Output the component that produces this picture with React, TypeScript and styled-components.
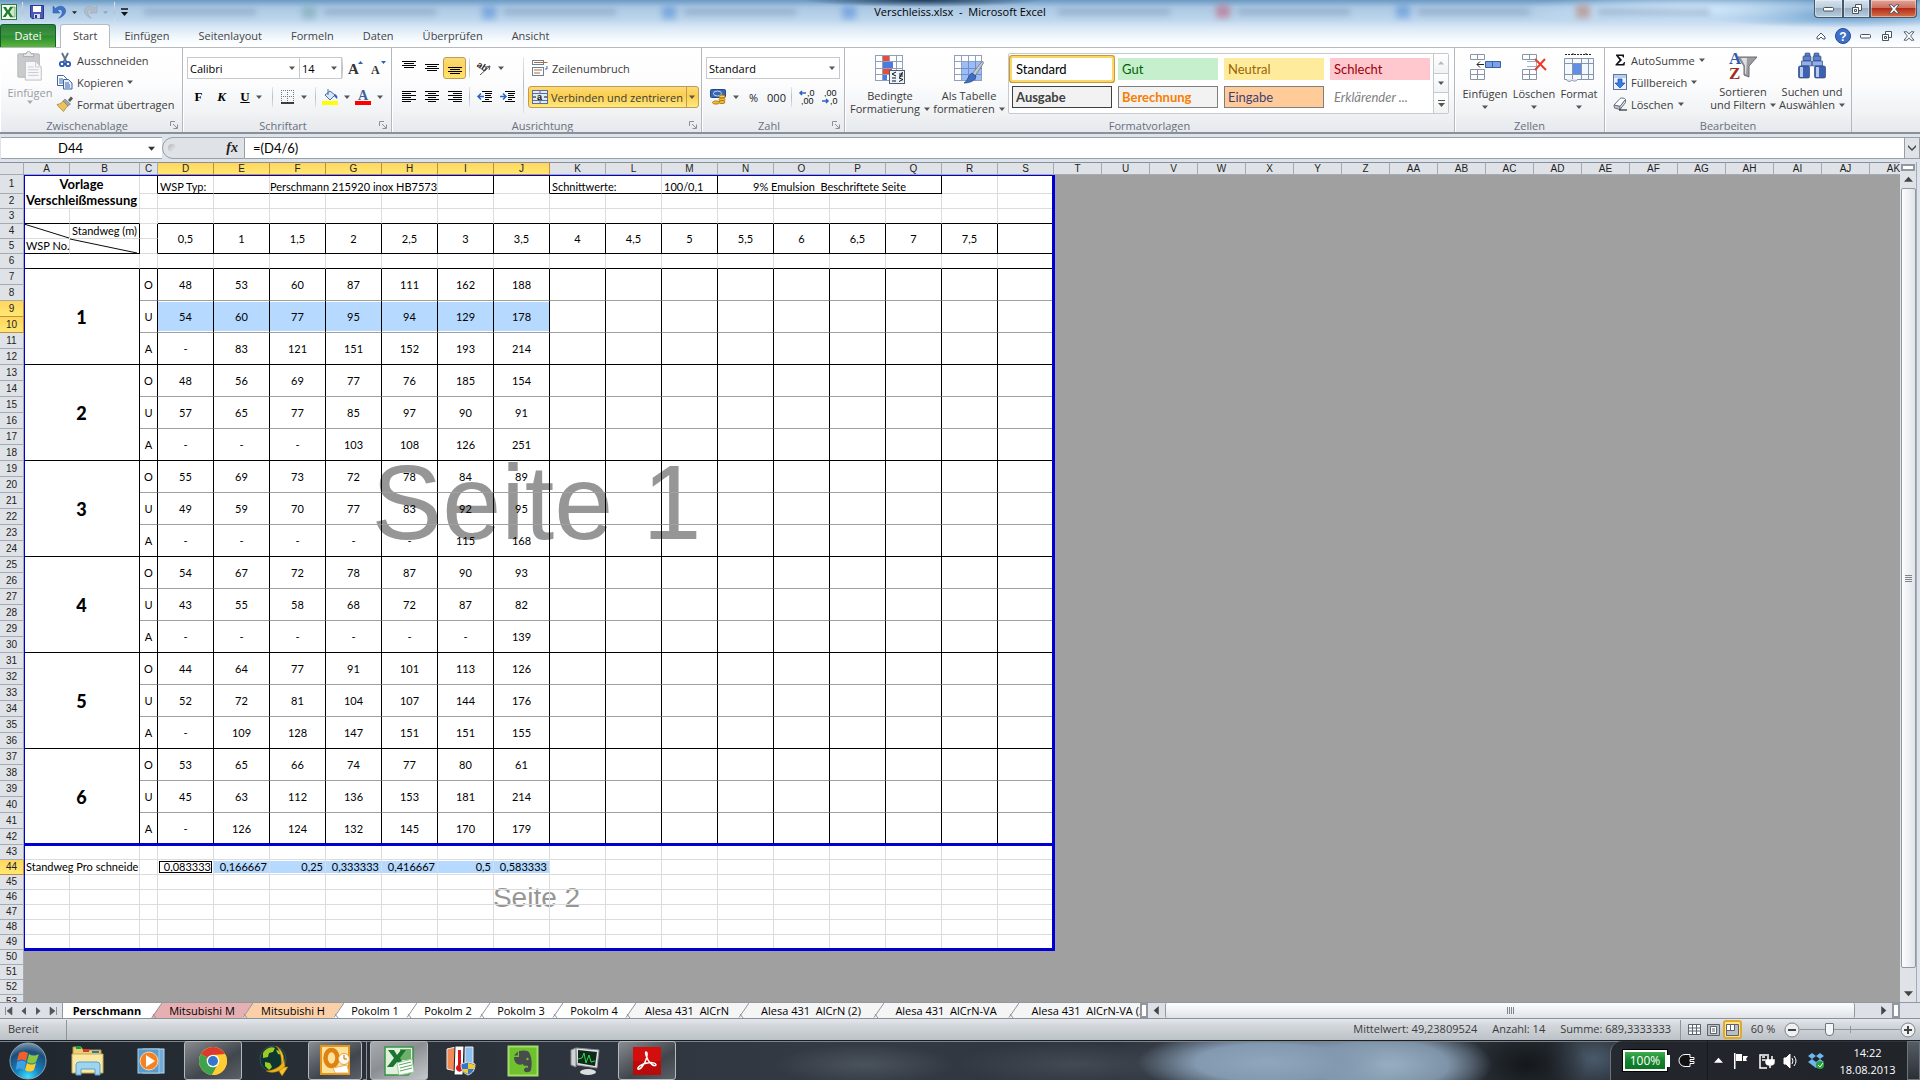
import React from 'react';
import styled, { createGlobalStyle, css } from 'styled-components';

const ui = "'Open Sans', 'Noto Sans', sans-serif";
const sheetFont = "Lato, 'Open Sans', sans-serif";
const arial = "'Liberation Sans', Arial, sans-serif";

const GlobalStyle = createGlobalStyle`
  * { box-sizing: border-box; }
  body { margin: 0; background: #a0a0a0; font-family: ${ui}; font-size: 11px; color: #3b3b3b; overflow: hidden; }
  button, input, select { font: inherit; color: inherit; margin: 0; padding: 0; border: 0; background: none; border-radius: 0; outline: 0; }
  svg { display: block; flex: none; overflow: visible; }
  h1 { margin: 0; font: inherit; }
`;

const Window = styled.div`
  display: flex;
  flex-direction: column;
  height: 100vh;
`;

/* ---------- title bar and ribbon tabs ---------- */

const Glass = styled.header`
  flex: none;
  background:
    radial-gradient(ellipse 120px 7px at 48% 0, #223c58 0, transparent 100%),
    radial-gradient(ellipse 170px 16px at 88% 10px, #d3e9fb 0, transparent 100%),
    radial-gradient(ellipse 150px 14px at 96% 14px, #5c95c8 0, transparent 100%),
    linear-gradient(180deg, #6a9ac4 0, #a9c6e2 7px, #bed7ed 20px, #dbe9f6 28px, #f7fbfe 40px, #ffffff 47px);
  border-bottom: 1px solid #b6babf;
`;

const TitleBar = styled.div`
  display: grid;
  grid-template-columns: 1fr auto 1fr;
  height: 24px;
`;

const QuickAccess = styled.div`
  display: flex;
  align-items: center;
  padding: 0 1px;
  gap: 4px;
  min-width: 0;
`;

const IconButton = styled.button<{ $w?: number; $h?: number }>`
  display: flex;
  align-items: center;
  justify-content: center;
  width: ${(p) => p.$w ?? 16}px;
  height: ${(p) => p.$h ?? 22}px;
`;

const GhostTabs = styled.div`
  display: flex;
  align-items: center;
  flex: 1;
  gap: 8px;
  height: 23px;
  padding: 0 12px;
  overflow: hidden;
  filter: blur(3px);
  opacity: 0.5;
`;

const GhostIcon = styled.span<{ $c: string }>`
  flex: none;
  width: 14px;
  height: 13px;
  background: ${(p) => p.$c};
`;

const GhostText = styled.span`
  flex: none;
  width: 112px;
  height: 6px;
  margin-right: 38px;
  background: #7793b2;
`;

const Title = styled.h1`
  font-size: 11px;
  line-height: 23px;
  color: #000;
  white-space: pre;
`;

const Caption = styled.div`
  display: flex;
  justify-content: flex-end;
  align-items: flex-start;
  min-width: 0;
  padding-right: 3px;
`;

const CaptionButton = styled.button<{ $close?: boolean; $w: number }>`
  display: flex;
  flex: none;
  justify-content: center;
  align-items: center;
  width: ${(p) => p.$w}px;
  height: 18px;
  border: 1px solid #46586b;
  border-top: 0;
  background: ${(p) => (p.$close
    ? 'linear-gradient(#e3a69b 0, #cf6f5f 45%, #b52c17 50%, #d4714a 100%)'
    : 'linear-gradient(#d5e2ee 0, #bccddd 45%, #98aec4 50%, #b9cede 100%)')};
  box-shadow: inset 0 0 0 1px rgba(255, 255, 255, 0.4);
  &:first-of-type { border-bottom-left-radius: 4px; }
  &:last-of-type { border-bottom-right-radius: 4px; }
`;

const TabRow = styled.nav`
  display: flex;
  align-items: flex-end;
  height: 23px;
`;

const FileTab = styled.button`
  width: 56px;
  height: 23px;
  padding-bottom: 1px;
  border: 1px solid #15602a;
  border-bottom: 0;
  border-radius: 3px 3px 0 0;
  background: linear-gradient(#2f7d38 0, #3c9440 45%, #2a8a30 50%, #5cb63d 100%);
  color: #fff;
  font-size: 11px;
`;

const RibbonTab = styled.button<{ $active?: boolean }>`
  height: 24px;
  margin-bottom: -1px;
  padding: 0 ${(p) => (p.$active ? 12 : 14)}px 2px;
  font-size: 11px;
  color: #444;
  & + & { padding-right: 15px; }
  ${(p) => p.$active && css`
    margin-left: 4px;
    background: #fff;
    border: 1px solid #b6babf;
    border-bottom: 0;
    border-radius: 3px 3px 0 0;
  `}
`;

const TabSpacer = styled.div`
  flex: 1;
`;

const WindowTools = styled.div`
  display: flex;
  align-items: center;
  gap: 4px;
  padding-right: 2px;
`;

/* ---------- ribbon ---------- */

const Ribbon = styled.section`
  display: flex;
  flex: none;
  height: 86px;
  background: linear-gradient(#fff 0, #fdfdfe 40%, #f1f3f5 75%, #e6e9ed 100%);
  border-bottom: 2px solid #8b9097;
  overflow: hidden;
`;

const Group = styled.div<{ $w: number }>`
  display: flex;
  flex-direction: column;
  flex: none;
  width: ${(p) => p.$w}px;
  border-right: 1px solid #b4b8be;
  box-shadow: inset 1px 0 0 #fff;
`;

const GroupBody = styled.div<{ $pad?: string }>`
  display: flex;
  height: 68px;
  padding: ${(p) => p.$pad ?? '1px 4px 0'};
`;

const GroupLabel = styled.div`
  display: flex;
  align-items: center;
  height: 16px;
  padding: 2px 4px 0;
  color: #68707c;
  span { flex: 1; text-align: center; }
`;

const Big = styled.button<{ $w: number; $off?: boolean }>`
  display: flex;
  flex-direction: column;
  align-items: center;
  flex: none;
  width: ${(p) => p.$w}px;
  line-height: 13px;
  white-space: nowrap;
  color: ${(p) => (p.$off ? '#9a9da1' : '#3b3b3b')};
  > svg:first-child { margin: 2px 0 5px; }
`;

const BigLine = styled.span`
  display: flex;
  align-items: center;
  gap: 4px;
  min-height: 13px;
`;

const Stack = styled.div<{ $gap?: number }>`
  display: flex;
  flex-direction: column;
  gap: ${(p) => p.$gap ?? 0}px;
`;

const Small = styled.button<{ $inset?: boolean }>`
  display: flex;
  align-items: center;
  gap: 4px;
  height: 22px;
  padding: 0 1px 0 ${(p) => (p.$inset ? 4 : 1)}px;
  white-space: nowrap;
`;

const Tools = styled.div`
  display: flex;
  align-items: center;
  height: 22px;
`;

const Tool = styled.button<{ $w?: number; $on?: boolean }>`
  display: flex;
  align-items: center;
  justify-content: center;
  gap: 6px;
  width: ${(p) => p.$w ?? 23}px;
  height: 22px;
  color: #222;
  ${(p) => p.$on && css`
    border: 1px solid #c29b4c;
    border-radius: 3px;
    background: linear-gradient(#fbdb7a 0, #fcd45c 40%, #fee46f 100%);
  `}
`;

const Letter = styled.span<{ $i?: boolean; $u?: boolean }>`
  font: ${(p) => (p.$i ? 'italic' : 'normal')} bold 13px 'Liberation Serif', serif;
  text-decoration: ${(p) => (p.$u ? 'underline' : 'none')};
  color: #000;
`;

const Divider = styled.span<{ $tall?: boolean; $m?: number }>`
  width: 1px;
  height: ${(p) => (p.$tall ? 56 : 20)}px;
  margin: 0 ${(p) => p.$m ?? 4}px;
  flex: none;
  background: linear-gradient(#e4e6e9, #b9bdc3 50%, #e0e3e6);
`;

const Field = styled.label<{ $w: number }>`
  display: flex;
  align-items: center;
  width: ${(p) => p.$w}px;
  height: 22px;
  margin-right: -1px;
  padding-right: 4px;
  background: #fff;
  border: 1px solid #c6cace;
  color: #000;
  select { appearance: none; flex: 1; min-width: 0; padding-left: 2px; height: 20px; }
`;

const MergeButton = styled.button`
  display: flex;
  align-items: center;
  gap: 3px;
  height: 22px;
  padding-left: 3px;
  border: 1px solid #c29b4c;
  border-radius: 3px;
  background: linear-gradient(#fbdb7a 0, #fbce4d 45%, #feea80 100%);
  white-space: nowrap;
`;

const MergeArrow = styled.span`
  display: flex;
  align-items: center;
  justify-content: center;
  width: 12px;
  height: 20px;
  border-left: 1px solid #c29b4c;
`;

const Gallery = styled.div`
  display: flex;
  width: 442px;
  height: 61px;
  border: 1px solid #c6cace;
  border-radius: 2px;
  background: #fff;
`;

const Swatches = styled.div`
  display: grid;
  grid-template-columns: repeat(4, 100px);
  grid-auto-rows: 22px;
  gap: 6px;
  flex: 1;
  padding: 4px 3px;
`;

const Swatch = styled.button<{ $bg: string; $fg: string; $line?: string; $bold?: boolean; $it?: boolean; $on?: boolean }>`
  padding-left: 3px;
  text-align: left;
  font-family: ${sheetFont};
  font-size: 13px;
  line-height: 18px;
  background: ${(p) => p.$bg};
  color: ${(p) => p.$fg};
  border: 1px solid ${(p) => p.$line ?? p.$bg};
  font-weight: ${(p) => (p.$bold ? 700 : 400)};
  font-style: ${(p) => (p.$it ? 'italic' : 'normal')};
  ${(p) => p.$on && css`box-shadow: 0 0 0 2px #fbd763, 0 0 0 3px #c69a3c; border-radius: 1px;`}
`;

const GalleryScroll = styled.div`
  display: grid;
  grid-template-rows: repeat(3, 1fr);
  width: 15px;
  border-left: 1px solid #c6cace;
  button { display: flex; align-items: center; justify-content: center; border-bottom: 1px solid #c6cace; background: linear-gradient(#fff, #f0f2f4); }
  button:last-child { border-bottom: 0; }
`;

/* ---------- formula bar ---------- */

const FormulaBar = styled.div`
  display: flex;
  flex: none;
  height: 28px;
  padding: 3px 0 3px 1px;
  background: #dde3ec;
`;

const NameBox = styled.label`
  display: flex;
  align-items: center;
  width: 161px;
  height: 22px;
  padding-right: 7px;
  background: #fff;
  border: 1px solid #9a9fa6;
  border-width: 1px 0;
  input { flex: 1; min-width: 0; padding-right: 8px; text-align: center; color: #000; font-family: ${sheetFont}; font-size: 13px; }
`;

const FxZone = styled.div`
  display: flex;
  align-items: center;
  justify-content: space-between;
  width: 83px;
  height: 22px;
  padding: 0 6px 0 5px;
  background: #dfe2e6;
  border: 1px solid #9a9fa6;
  border-radius: 11px 0 0 11px;
  color: #222;
`;

const FxKnob = styled.span`
  width: 8px;
  height: 8px;
  border-radius: 50%;
  background: linear-gradient(135deg, #b3b6ba, #eef0f2);
`;

const FxButton = styled.button`
  font: italic bold 14px 'Liberation Serif', serif;
`;

const Formula = styled.input`
  && {
    flex: 1;
    height: 22px;
    padding-left: 8px;
    background: #fff;
    border: 1px solid #9a9fa6;
    border-width: 1px 0;
    color: #000;
    font-family: ${sheetFont};
    font-size: 13px;
  }
`;

const Expand = styled.button`
  && {
    display: flex;
    align-items: center;
    justify-content: center;
    width: 16px;
    height: 22px;
    border: 1px solid #9a9fa6;
    background: #dfe3e8;
  }
`;

/* ---------- work sheet ---------- */

const Work = styled.main`
  display: flex;
  flex: 1;
  min-height: 0;
  padding-right: 3px;
  background: #dde3ec;
`;

const Canvas = styled.div`
  position: relative;
  flex: 1;
  min-width: 0;
  overflow: hidden;
  background: #a0a0a0;
`;

const Paper = styled.div<{ $top: number; $h: number; $size: number; $drop: number }>`
  position: absolute;
  left: 24px;
  top: ${(p) => p.$top}px;
  width: 1031px;
  height: ${(p) => p.$h}px;
  display: flex;
  align-items: center;
  justify-content: center;
  padding: 0 6px ${(p) => p.$drop}px 0;
  background: #fff;
  font-family: ${arial};
  font-size: ${(p) => p.$size}px;
  color: #969696;
`;

const PageBorder = styled.div<{ $top: number; $h: number }>`
  position: absolute;
  left: 24px;
  top: ${(p) => p.$top}px;
  width: 1031px;
  height: ${(p) => p.$h}px;
  border: 1px solid #0000d2;
  border-width: ${(p) => (p.$top > 100 ? 0 : 1)}px 3px 3px 1px;
  pointer-events: none;
`;

const Sheet = styled.table`
  position: relative;
  table-layout: fixed;
  width: 1918px;
  border-collapse: separate;
  border-spacing: 0;
  font-family: ${sheetFont};
  font-size: 11px;
  line-height: 12px;
  color: #000;
  td, th { padding: 0; overflow: visible; white-space: nowrap; font-weight: 400; }
`;

const headSkin = css<{ $on?: boolean }>`
  background: ${(p) => (p.$on ? 'linear-gradient(#ffd65e, #ffe873)' : '#dfe2e7')};
  border: 0 solid ${(p) => (p.$on ? '#c0903c' : '#a5abb3')};
  color: #222;
  font-family: ${arial};
`;

const ColHead = styled.th<{ $on?: boolean }>`
  ${headSkin}
  height: 13px;
  border-width: 1px 1px 1px 0;
  border-top-color: #8b9097;
  font-size: 10px;
  line-height: 11px;
`;

const RowHead = styled.th<{ $on?: boolean; $h: number }>`
  ${headSkin}
  height: ${(p) => p.$h}px;
  border-width: 0 1px 1px 0;
  font-size: 10px;
  line-height: 12px;
`;

const light = '#dcdcdc';

const Cell = styled.td<{ $r?: string; $b?: string; $align?: string; $sel?: boolean; $active?: boolean; $va?: string }>`
  position: relative;
  border: 0 solid;
  border-right: 1px solid ${(p) => p.$r ?? light};
  border-bottom: 1px solid ${(p) => p.$b ?? light};
  text-align: ${(p) => p.$align ?? 'center'};
  vertical-align: ${(p) => p.$va ?? 'middle'};
  && { padding: 0 ${(p) => (p.$align ? 2 : 0)}px; }
  ${(p) => p.$sel && css`background: #b5d9ff; box-shadow: inset 0 1px 0 #fff, inset 0 -1px 0 #fff;`}
  ${(p) => p.$active && css`box-shadow: inset 0 0 0 1px #fff, inset 0 0 0 2px #000;`}
`;

const SheetTitle = styled(Cell)`
  font-size: 13px;
  line-height: 16px;
  strong { font-weight: 700; }
`;

const BlockNo = styled(Cell)`
  font-size: 18px;
  line-height: 20px;
  strong { font-weight: 900; }
`;

const Diagonal = styled.svg`
  position: absolute;
  inset: 0;
  width: 100%;
  height: 100%;
`;

const VScroll = styled.div`
  display: flex;
  flex-direction: column;
  align-items: center;
  width: 17px;
  padding-top: 2px;
  border-right: 1px solid #a5abb3;
  background: #dfe2e7;
`;

const SplitBox = styled.span<{ $v?: boolean }>`
  width: ${(p) => (p.$v ? 8 : 14)}px;
  height: ${(p) => (p.$v ? 15 : 7)}px;
  flex: none;
  border: 2px solid #9298a0;
  background: #fff;
`;

const ScrollArrow = styled.button<{ $h?: number }>`
  display: flex;
  align-items: center;
  justify-content: center;
  flex: none;
  width: 17px;
  height: ${(p) => p.$h ?? 17}px;
`;

const VThumb = styled.div`
  display: flex;
  align-items: center;
  justify-content: center;
  flex: 1;
  width: 15px;
  margin-bottom: 17px;
  border: 1px solid #9298a0;
  border-radius: 2px;
  background: linear-gradient(90deg, #fdfdfe, #dfe3e8);
`;

/* ---------- sheet tabs ---------- */

const TabBar = styled.div`
  display: flex;
  flex: none;
  height: 17px;
  padding-right: 20px;
  background: #dde1e7;
  border-top: 1px solid #9298a0;
  border-bottom: 1px solid #8a9199;
`;

const TabArea = styled.div`
  display: flex;
  flex: none;
  width: 1140px;
  overflow: hidden;
  background: #f4f5f6;
`;

const NavButtons = styled.div`
  display: flex;
  flex: none;
  width: 63px;
  padding: 0 2px;
  background: #dde1e7;
  border-right: 1px solid #9298a0;
`;

const SheetTab = styled.button<{ $w: number; $bg?: string; $on?: boolean }>`
  flex: none;
  width: ${(p) => p.$w}px;
  height: 15px;
  background: ${(p) => p.$bg ?? '#fff'};
  color: #000;
  font-size: 11px;
  line-height: 14px;
  font-weight: ${(p) => (p.$on ? 700 : 400)};
  white-space: pre;
`;

const Slope = styled.svg`
  flex: none;
`;

const HThumb = styled.div`
  display: flex;
  align-items: center;
  justify-content: center;
  flex: 1;
  margin-right: 20px;
  border: 1px solid #9298a0;
  border-width: 0 1px;
  border-radius: 2px;
  background: linear-gradient(#fdfdfe, #dfe3e8);
`;

/* ---------- status bar ---------- */

const StatusBar = styled.footer`
  display: flex;
  align-items: center;
  flex: none;
  height: 21px;
  padding: 0 4px 0 8px;
  background: linear-gradient(#e4e7eb 0, #d3d7dc 30%, #bcc1c7 100%);
  white-space: nowrap;
`;

const Ready = styled.span`
  width: 59px;
  height: 20px;
  line-height: 18px;
  border-right: 1px solid #8f959c;
`;

const Stats = styled.div`
  display: flex;
  flex: 1;
  justify-content: flex-end;
  gap: 15px;
  margin-right: 9px;
  padding-bottom: 2px;
`;

const Views = styled.div`
  display: flex;
  align-items: center;
  height: 20px;
  padding-left: 4px;
  border-left: 1px solid #8f959c;
`;

const ViewButton = styled.button<{ $on?: boolean }>`
  && {
    display: flex;
    align-items: center;
    justify-content: center;
    width: 19px;
    height: 19px;
    border: ${(p) => (p.$on ? '2px solid #e0a92c' : '0')};
    border-radius: 3px;
    background: ${(p) => (p.$on ? '#ffe48a' : 'none')};
  }
`;

const ZoomValue = styled.span`
  width: 42px;
  padding-bottom: 2px;
  text-align: center;
`;

const ZoomSlider = styled.input`
  appearance: none;
  width: 100px;
  height: 14px;
  && { background: linear-gradient(#8c97a5, #8c97a5) 0 50% / 100% 1px no-repeat, linear-gradient(#8c97a5, #8c97a5) 50% 50% / 1px 7px no-repeat; }
  &::-webkit-slider-thumb { appearance: none; width: 9px; height: 13px; border: 1px solid #6c7580; border-radius: 1px 1px 4px 4px; background: #f4f6f8; }
`;

/* ---------- task bar ---------- */

const Taskbar = styled.footer`
  display: flex;
  flex: none;
  height: 40px;
  border-top: 1px solid #1b1f24;
  box-shadow: inset 0 1px 0 #7c848d;
  background:
    radial-gradient(ellipse 130px 34px at 66% 55%, #8fa6bc 0, #8399af 55%, transparent 100%),
    radial-gradient(ellipse 110px 40px at 72% 60%, #9bb2c6 0, #7e93a8 60%, transparent 100%),
    radial-gradient(ellipse 60px 40px at 79.5% 60%, #14181c 0, transparent 100%),
    radial-gradient(ellipse 50px 34px at 83% 45%, #4a5a6b 0, transparent 100%),
    radial-gradient(ellipse 90px 20px at 45% 60%, #4a525c 0, transparent 100%),
    radial-gradient(ellipse 120px 24px at 56% 60%, #434a53 0, transparent 100%),
    linear-gradient(90deg, #20262d 0, #2a3038 20%, #343b45 45%, #2d333c 58%, #3a424c 62%, #262b31 84%, #1d2126 100%);
`;

const TaskItems = styled.div`
  display: flex;
  flex: 1;
  align-items: center;
`;

const TaskButton = styled.button<{ $open?: boolean; $bright?: boolean; $w?: number }>`
  && {
    display: flex;
    align-items: center;
    justify-content: center;
    width: ${(p) => p.$w ?? 62}px;
    height: 39px;
    ${(p) => p.$open && css`
      margin: 0 2px;
      border: 1px solid #b5babf;
      border-radius: 3px;
      background: ${p.$bright
        ? 'linear-gradient(150deg, #a8abae 0, #8b8f93 45%, #c5c8ca 100%)'
        : 'linear-gradient(150deg, #888c91 0, #5c6167 35%, #41464d 60%, #5a6067 100%)'};
    `}
  }
`;

const StackEdge = styled.span`
  width: 4px;
  height: 39px;
  margin: 0 1px 0 -1px;
  border: 1px solid #8d9399;
  border-left: 0;
`;

const Tray = styled.div`
  display: flex;
  align-items: center;
  height: 39px;
  padding-left: 12px;
  background: rgba(34, 38, 44, 0.85);
  border-left: 1px solid #6c737b;
  border-radius: 12px 0 0 0;
  color: #fff;
`;

const Power = styled.div`
  display: flex;
  align-items: center;
  gap: 9px;
  width: 85px;
  height: 39px;
  border-right: 1px solid #16191d;
`;

const Battery = styled.span`
  display: flex;
  align-items: center;
  justify-content: center;
  width: 44px;
  height: 21px;
  border: 2px solid #fff;
  outline: 1px solid #000;
  background: linear-gradient(#3fae4e 0, #14852c 50%, #0d7524 100%);
  font-size: 12px;
`;

const BatteryCap = styled.span`
  width: 3px;
  height: 12px;
  margin-left: -9px;
  background: #fff;
`;

const TrayIcons = styled.div`
  display: flex;
  align-items: center;
  justify-content: space-between;
  width: 116px;
  margin-right: 4px;
  padding-left: 6px;
`;

const Clock = styled.div`
  width: 79px;
  text-align: center;
  font-size: 11px;
  line-height: 17px;
`;

const ShowDesktop = styled.button`
  && {
    width: 13px;
    height: 39px;
    border: 1px solid #6d747c;
    background: linear-gradient(#565c64, #2b3036);
  }
`;

/* ---------- drawings ---------- */

const Arrow = ({ up, left, right, c = '#555', s = 7 }: { up?: boolean; left?: boolean; right?: boolean; c?: string; s?: number }) => {
  const rot = up ? 180 : left ? 90 : right ? -90 : 0;
  return (
    <svg width={s} height={s} viewBox="0 0 8 8">
      <path d="M0 2h8L4 6.5z" fill={c} transform={`rotate(${rot} 4 4)`} />
    </svg>
  );
};

const Launcher = () => (
  <svg width="8" height="8" viewBox="0 0 8 8" fill="none" stroke="#8a9098">
    <path d="M.5 5V.5H5M3 3l4 4M7.500 3.500v4h-4" />
  </svg>
);

const CustomizeIcon = () => (
  <svg width="7" height="8" viewBox="0 0 7 8"><path d="M0 1h7" stroke="#111" strokeWidth="1.500" /><path d="M0 4h7L3.500 8z" fill="#111" /></svg>
);

const ExcelLogo = () => (
  <svg width="16" height="16" viewBox="0 0 16 16">
    <rect x=".5" y=".5" width="15" height="15" fill="#f4fbf2" stroke="#2d7a35" />
    <path d="M9 3h5v10H9" fill="#cfe8c9" stroke="#5ba35a" strokeWidth=".8" />
    <path d="M2 3h3l2 3.400L9 3h3L8.600 8 12 13H9L6.800 9.600 4.700 13H1.700l3.500-5z" fill="#1f7a2f" />
  </svg>
);

const SaveIcon = () => (
  <svg width="14" height="14" viewBox="0 0 14 14">
    <path d="M.5.5h13v13H2l-1.500-1.500z" fill="#4a58b8" stroke="#2a3688" />
    <path d="M3 1h8v6H3z" fill="#fff" />
    <path d="M4 9h6v4.500H4z" fill="#d9def2" /><path d="M5 10h2v3H5z" fill="#2a3688" />
  </svg>
);

const UndoIcon = ({ redo }: { redo?: boolean }) => (
  <svg width="13" height="14" viewBox="0 0 13 14">
    <path
      d="M0 1v7h7L4.700 5.500C6.800 3.700 9.200 4.600 9.200 7.200c0 2.200-1.500 4-3.700 6 4.200-1.200 7.100-4 7.100-7.200C12.600 1.200 6.500-.6 2.500 3.400z"
      fill={redo ? '#b3bcc6' : '#3e73c8'}
      stroke={redo ? '#98a3af' : '#2a57a5'}
      strokeWidth=".5"
      transform={redo ? 'translate(13 0) scale(-1 1)' : undefined}
    />
  </svg>
);

const PasteIcon = () => (
  <svg width="28" height="30" viewBox="0 0 28 32">
    <rect x="1" y="3" width="23" height="25" rx="1" fill="#c9cacc" stroke="#b5b6b8" />
    <path d="M7 5V3h3a2.500 2.500 0 0 1 5 0h3v3H7z" fill="#e8e9ea" stroke="#a7a8aa" />
    <path d="M9 11h11l6 6v14H9z" fill="#f7f7f9" stroke="#bcbdc4" />
    <path d="M20 11v6h6M12 17h6M12 20h11M12 23h11M12 26h11" fill="none" stroke="#c8c9d0" />
  </svg>
);

const CutIcon = () => (
  <svg width="16" height="16" viewBox="0 0 16 16" fill="none">
    <path d="M5 1l4.500 9M11 1L6.500 10" stroke="#5f7186" strokeWidth="1.800" />
    <circle cx="5" cy="12" r="2.200" stroke="#2c59b4" strokeWidth="1.800" /><circle cx="11" cy="12" r="2.200" stroke="#2c59b4" strokeWidth="1.800" />
  </svg>
);

const CopyIcon = () => (
  <svg width="16" height="16" viewBox="0 0 16 16" stroke="#3c66a8">
    <path d="M.5 1.500h6l3 3v7h-9z" fill="#fff" /><path d="M2 5h4M2 7h5M2 9h4" />
    <path d="M6.500 5.500h5l3.500 3.500v6H6.500z" fill="#e4eeff" /><path d="M8 9h4M8 11h5M8 13h5" />
  </svg>
);

const BrushIcon = () => (
  <svg width="16" height="16" viewBox="0 0 16 16">
    <path d="M11 4l3-3.500 2 2L13 6z" fill="#59554f" />
    <path d="M8 3l5.500 5L11 10 6 5z" fill="#9ba4b0" stroke="#6b7079" strokeWidth=".6" />
    <path d="M6 5l5 5c-2 1-3 4-4.500 5.500C4 13 1.500 11 0 8.500 3 8 5 7 6 5z" fill="#e9c45e" stroke="#a17c25" strokeWidth=".7" />
  </svg>
);

const FontSize = ({ up }: { up?: boolean }) => (
  <svg width="15" height="16" viewBox="0 0 15 16">
    <text x="0" y="14" fontFamily="Liberation Serif" fontWeight="700" fontSize={up ? 15 : 12} fill="#333">A</text>
    <path d={up ? 'M10 4h5l-2.500-3z' : 'M10 1h5l-2.500 3z'} fill="#2d5fb8" />
  </svg>
);

const BordersIcon = () => (
  <svg width="14" height="14" viewBox="0 0 14 14" stroke="#777" fill="none">
    <path d="M.5 0v13M6.500 0v13M12.500 0v13M0 .5h13M0 6.500h13" strokeDasharray="1 1" />
    <path d="M0 13h13" stroke="#000" strokeWidth="1.500" />
  </svg>
);

const FillIcon = () => (
  <svg width="16" height="16" viewBox="0 0 16 16">
    <path d="M3 6l5-4 5 4-5 5z" fill="#d9e6f7" stroke="#4c6f9f" /><path d="M6 0v6" stroke="#4c6f9f" />
    <path d="M13 5c2 1 3 3 2 5l-3-3z" fill="#2c62b8" /><path d="M0 12h16v4H0z" fill="#ff0" />
  </svg>
);

const FontColorIcon = () => (
  <svg width="16" height="16" viewBox="0 0 16 16">
    <text x="3" y="11" fontFamily="Liberation Serif" fontWeight="700" fontSize="14" fill="#3b5f9d">A</text>
    <path d="M0 12h16v4H0z" fill="#f00" />
  </svg>
);

const Lines = ({ rows }: { rows: [number, number][] }) => (
  <svg width="14" height="14" viewBox="0 0 14 14" stroke="#000">
    {rows.map(([a, b], i) => <path key={i} d={`M${a} ${i * 2 + 1.5}H${b}`} />)}
  </svg>
);

const VAlign = ({ y }: { y: number }) => (
  <svg width="14" height="16" viewBox="0 0 14 16" stroke="#000">
    <path d={`M0 ${y + 0.5}h14M2 ${y + 2.5}h10M0 ${y + 4.5}h14M2 ${y + 6.5}h10`} />
  </svg>
);

const OrientIcon = () => (
  <svg width="16" height="16" viewBox="0 0 16 16">
    <text x="0" y="9" fontFamily="Liberation Sans" fontSize="9" fontWeight="700" fill="#222" transform="rotate(35 5 8)">ab</text>
    <path d="M4 15L14 6M14 6l-4 1M14 6l-1 4" stroke="#555" fill="none" />
  </svg>
);

const IndentIcon = ({ right }: { right?: boolean }) => (
  <svg width="16" height="14" viewBox="0 0 16 14" stroke="#000">
    <path d="M5 1.500h10M8 3.500h7M8 5.500h6M8 7.500h7M8 9.500h4M5 11.500h10" />
    <path d={right ? 'M0 6.500h6M3 3.500l3 3-3 3' : 'M7 6.500H1M4 3.500l-3 3 3 3'} stroke="#2d64c4" strokeWidth="1.500" fill="none" />
  </svg>
);

const WrapIcon = () => (
  <svg width="16" height="16" viewBox="0 0 16 16" fill="none" stroke="#6f7f98">
    <rect x=".5" y=".5" width="11" height="4" /><rect x=".5" y="7.500" width="11" height="8" />
    <path d="M2 2.500h13.500M2 10h8M2 13h6" stroke="#b56a3c" /><path d="M15 6v3h-2" stroke="#2d64c4" />
  </svg>
);

const MergeIcon = () => (
  <svg width="16" height="14" viewBox="0 0 16 14">
    <rect x=".5" y=".5" width="15" height="13" fill="#dfe9f7" stroke="#5b6f8d" />
    <path d="M.5 3.500h15M.5 10.500h15M8 .5v3M8 10.500v3" stroke="#5b6f8d" />
    <path d="M1 7h3M12 7h3" stroke="#111" /><text x="5" y="9.500" fontFamily="Liberation Sans" fontWeight="700" fontSize="9" fill="#111">a</text>
  </svg>
);

const MoneyIcon = () => (
  <svg width="17" height="16" viewBox="0 0 17 16">
    <rect x=".5" y=".5" width="15" height="8" rx="1" fill="#3667b5" stroke="#22478a" />
    <ellipse cx="7.500" cy="4.500" rx="4" ry="2.500" fill="none" stroke="#c3d6f4" />
    <ellipse cx="12" cy="7.500" rx="3" ry="1.500" fill="#f9d05a" stroke="#b57c14" /><ellipse cx="12" cy="10.500" rx="3" ry="1.500" fill="#f5b935" stroke="#b57c14" />
    <ellipse cx="6" cy="13.500" rx="3.500" ry="1.600" fill="#f5b935" stroke="#b57c14" /><ellipse cx="12" cy="13" rx="3" ry="1.600" fill="#f5b935" stroke="#b57c14" />
  </svg>
);

const DecimalIcon = ({ less }: { less?: boolean }) => (
  <svg width="16" height="16" viewBox="0 0 16 16">
    <text x={less ? 2 : 8} y="7" fontFamily="Liberation Sans" fontSize="9" fill="#111">{less ? ',00' : ',0'}</text>
    <text x={less ? 8 : 2} y="15" fontFamily="Liberation Sans" fontSize="9" fill="#111">{less ? ',0' : ',00'}</text>
    <path d={less ? 'M0 12h6M4 10l2 2-2 2' : 'M7 4H1M3 2L1 4l2 2'} stroke="#2d64c4" strokeWidth="1.500" fill="none" />
  </svg>
);

const GridBase = () => (
  <g>
    <rect x=".5" y=".5" width="27" height="25" fill="#fff" stroke="#8ea0bd" />
    <path d="M7.500 0v26M14.500 0v26M21.500 0v26M0 6.500h28M0 13.500h28M0 19.500h28" stroke="#8ea0bd" />
  </g>
);

const ConditionalIcon = () => (
  <svg width="30" height="29" viewBox="0 0 30 29">
    <GridBase />
    <path d="M8 1h6v5H8zM8 14h9v5H8z" fill="#ee4a33" /><path d="M8 7h10v6H8zM8 20h4v5H8z" fill="#4a7be0" />
    <rect x="14.500" y="15.500" width="15" height="13" fill="#eef3fb" stroke="#4e5c70" />
    <path d="M21 17l-4 2 4 2M17 23h4M17 26h4M24 19h4M24 21h4M27.500 17l-3 6M24 23l4 1.500-4 2" fill="none" stroke="#111" />
  </svg>
);

const TableIcon = () => (
  <svg width="30" height="29" viewBox="0 0 30 29">
    <GridBase />
    <path d="M8 7h19v18H8z" fill="#9dbcf3" /><path d="M14.500 6v20M21.500 6v20M7 13.500h21M7 19.500h21" stroke="#6d8fd0" />
    <path d="M28.500 6l1 2L21 21l-3-2z" fill="#c7ccd3" stroke="#63686f" strokeWidth=".7" />
    <path d="M18 18l4 3c-1 5-6 7-12 7 4-2 4-8 8-10z" fill="#3f6fc0" stroke="#1f4488" strokeWidth=".7" />
  </svg>
);

const InsertCells = () => (
  <svg width="31" height="29" viewBox="0 0 31 29" fill="#fff" stroke="#8894a8">
    <path d="M.5 1.500h14v5H.5zM7.500 1.500v5M.5 16.500h14v10H.5zM7.500 16.500v10M.5 21.500h14" />
    <path d="M15.500 8.500h15v6h-15zM22.500 8.500v6" fill="#7aa2ea" stroke="#3c5f9e" /><path d="M14 11.500H7M10 8.500l-3 3 3 3" fill="none" stroke="#222" />
  </svg>
);

const DeleteCells = () => (
  <svg width="25" height="29" viewBox="0 0 25 29" fill="#fff" stroke="#8894a8">
    <path d="M.5 1.500h14v5H.5zM7.500 1.500v5M.5 16.500h14v10H.5zM7.500 16.500v10M.5 21.500h14" />
    <path d="M5.500 8.500h9v5h-9" strokeDasharray="1 1" stroke="#3c5f9e" /><path d="M13 6l11 11M23 6L13 17" stroke="#ee3a22" strokeWidth="2" />
  </svg>
);

const FormatCells = () => (
  <svg width="31" height="29" viewBox="0 0 31 29" fill="#f4f8ff" stroke="#8894a8">
    <path d="M.5 5.500h29v21H.5zM.5 10.500h29M.5 21.500h29M8.500 5.500v21M17.500 5.500v21M24.500 5.500v21" />
    <path d="M9 11h8v10H9z" fill="#5f8ee6" stroke="none" /><path d="M1 1.500h27M9 0v3M22 0v3" strokeDasharray="2 1" stroke="#222" />
    <path d="M2 26c1 3 5 3 6 1 2 2 5 1 6-1" fill="#dfe8f5" />
  </svg>
);

const SumIcon = () => (
  <svg width="14" height="14" viewBox="0 0 14 14">
    <path d="M3 1.500h8v3h-1q0-1.500-1.500-1.500H5.500L9 7l-4 4h4q1.500 0 2-2h1l-.5 3.500H2.500v-1L6.500 7 3 2.500z" fill="#111" />
  </svg>
);

const FillDown = () => (
  <svg width="14" height="16" viewBox="0 0 14 16">
    <rect x=".5" y=".5" width="13" height="15" fill="#eaf2ff" stroke="#5d789f" /><path d="M1 1h12v3H1z" fill="#b9cdec" />
    <path d="M5 5h4v4h3l-5 5-5-5h3z" fill="#3a7ae4" stroke="#1e4fae" strokeWidth=".7" />
  </svg>
);

const EraserIcon = () => (
  <svg width="14" height="14" viewBox="0 0 14 14" stroke="#6a7180">
    <path d="M1 8l6-6.500c1-1 5-.5 5.500 1L7 9.500z" fill="#fff" /><path d="M1 8l6 1.500v3L1.500 11z" fill="#b9c6dc" /><path d="M12.500 2.500v3L7 12.500v-3z" fill="#dfe6f1" /><path d="M6 13h8" stroke="#000" />
  </svg>
);

const SortIcon = () => (
  <svg width="30" height="29" viewBox="0 0 30 29">
    <text x="1" y="13" fontFamily="Liberation Serif" fontWeight="700" fontSize="17" fill="#2f5ba8">A</text>
    <text x="1" y="28" fontFamily="Liberation Serif" fontWeight="700" fontSize="17" fill="#9c2f28">Z</text>
    <path d="M10 6h19l-8 9v11l-5-2v-9z" fill="#9b9da0" stroke="#6b6d70" /><path d="M13 7h6l-1 16-1-.5v-8z" fill="#dfe0e1" />
  </svg>
);

const FindIcon = () => (
  <svg width="28" height="29" viewBox="0 -2 28 29" stroke="#22386e" strokeWidth=".6" fill="#5d82cc">
    <rect x="7" y="0" width="5" height="4" rx="1" /><rect x="16" y="0" width="5" height="4" rx="1" />
    <rect x="5" y="3" width="8" height="5" rx="1" /><rect x="15" y="3" width="8" height="5" rx="1" />
    <path d="M3.500 8h10v5h-10zM14.500 8h10v5h-10z" fill="#8fb0ea" /><rect x=".5" y="13" width="11" height="12" rx="1.500" fill="#3d62b0" /><rect x="16.500" y="13" width="11" height="12" rx="1.500" fill="#3d62b0" />
    <path d="M2 14h3v10H2zM18 14h3v10h-3z" fill="#b5cbf3" stroke="none" />
  </svg>
);

const HelpIcon = () => (
  <svg width="16" height="16" viewBox="0 0 16 16">
    <circle cx="8" cy="8" r="7.500" fill="#3f6fc9" stroke="#274a96" />
    <text x="8" y="12.500" textAnchor="middle" fontFamily="Liberation Sans" fontWeight="700" fontSize="12" fill="#fff">?</text>
  </svg>
);

const MinGlyph = ({ w = 11 }: { w?: number }) => (
  <svg width={w} height="6" viewBox="0 0 11 6"><rect x=".5" y="1.500" width="10" height="3.500" rx="1" fill="#fff" stroke="#4a5561" /></svg>
);
const RestoreGlyph = () => (
  <svg width="12" height="12" viewBox="0 0 12 12" fill="#fff" stroke="#4a5561"><path d="M4.500 1.500h6v6h-6z" /><path d="M1.500 4.500h6v6h-6z" /><path d="M3.500 6.500h2v2h-2z" /></svg>
);
const CloseGlyph = () => (
  <svg width="12" height="10" viewBox="0 0 12 10"><path d="M1 .8h3L6 3.200 8 .8h3L7.600 5 11 9.200H8L6 6.800 4 9.200H1L4.400 5z" fill="#fff" stroke="#4a5561" strokeWidth=".9" /></svg>
);

const StartOrb = () => (
  <svg width="38" height="38" viewBox="0 0 38 38">
    <defs><radialGradient id="orb" cx=".5" cy=".95" r=".95"><stop offset="0" stopColor="#3fe0ff" /><stop offset=".35" stopColor="#1683c0" /><stop offset=".75" stopColor="#1c4c78" /><stop offset="1" stopColor="#7f9bb4" /></radialGradient></defs>
    <circle cx="19" cy="19" r="18" fill="url(#orb)" stroke="#87a7be" />
    <path d="M10 11c3-2 6-2 9 0l-2 8c-3-2-6-2-9 0z" fill="#f0602b" /><path d="M20 12c3 2 6 2 10 0l-3 8c-3 2-6 2-9 0z" fill="#8cc63e" />
    <path d="M8 20c3-2 6-2 9 0l-2 8c-3-2-5-2-8 0z" fill="#3fa0ea" /><path d="M18 21c3 2 6 2 9 0l-2 7c-3 2-6 2-9 0z" fill="#ffcb2d" />
  </svg>
);

const FolderIcon = () => (
  <svg width="34" height="32" viewBox="0 0 34 32">
    <path d="M2 2h8l2 3h18v22H2z" fill="#e9cf75" stroke="#b2973f" /><path d="M5 1h5v3H5z" fill="#1d9c3a" /><path d="M12 4h6v3h-6z" fill="#d23c2e" /><path d="M21 6h7v2h-7z" fill="#2a74c8" />
    <path d="M1 9h31v19H1z" fill="#f9e9a4" stroke="#c5a950" /><path d="M5 30V20q0-3 3-3h18q3 0 3 3v10h-5v-6H10v6z" fill="#9ed4f2" stroke="#5ba0cb" />
  </svg>
);

const MediaIcon = () => (
  <svg width="28" height="28" viewBox="0 0 28 28">
    <rect x="6" y="2" width="21" height="24" fill="#74abd6" stroke="#b7d9f1" /><rect x="1" y="2" width="21" height="24" fill="#5b9ccd" stroke="#a5cfec" />
    <circle cx="12" cy="14" r="9" fill="#f58220" stroke="#fbd4b0" /><path d="M9 8l9 6-9 6z" fill="#fff" />
  </svg>
);

const ChromeIcon = () => (
  <svg width="28" height="28" viewBox="0 0 28 28">
    <circle cx="14" cy="14" r="14" fill="#fc3" /><path d="M14 14L1.900 7A14 14 0 0 1 26.100 7L14 8z" fill="#dc3a2c" />
    <path d="M14 14L1.900 7A14 14 0 0 0 13 28l6-11z" fill="#3fa34d" /><path d="M14 8h12.600A14 14 0 0 1 13 28l6-11z" fill="#fc3" />
    <circle cx="14" cy="14" r="6.300" fill="#fff" /><circle cx="14" cy="14" r="5" fill="#3476c9" />
  </svg>
);

const GlobeIcon = () => (
  <svg width="32" height="32" viewBox="0 0 32 32">
    <circle cx="14" cy="14" r="13" fill="#0e3530" stroke="#38505c" />
    <path d="M4 8c3-5 8-7 12-5l-2 4-4 1-1 4-5 1zM17 5l4 1 2 4-4-1zM6 17l5 1 2 4-3 3-4-4z" fill="#9ccc24" />
    <path d="M17 1c8 5 9 13 7 21h5l-6 9-5-8 4-1c1-8 0-15-5-21z" fill="#f7c32c" stroke="#96690a" strokeWidth=".6" />
    <path d="M25 14c-2 7-8 11-18 12 6 3 14 1 19-5z" fill="#edb21c" stroke="#96690a" strokeWidth=".5" />
  </svg>
);

const OutlookIcon = () => (
  <svg width="30" height="31" viewBox="0 0 30 31">
    <rect x="1" y="1" width="28" height="28" fill="#fbe29a" stroke="#e4951a" strokeWidth="2" />
    <ellipse cx="11.500" cy="13" rx="6" ry="8" fill="none" stroke="#df8212" strokeWidth="4.500" />
    <circle cx="24" cy="14" r="5.500" fill="#fffaf0" stroke="#e4a546" /><path d="M24 10v4h3" stroke="#b36a15" fill="none" /><path d="M13 23l14-3 2 8H15z" fill="#fff" stroke="#e6b25b" />
  </svg>
);

const ExcelIcon = () => (
  <svg width="30" height="30" viewBox="0 0 30 30">
    <path d="M1 1h28v23l-5 5H1z" fill="#dff1dc" stroke="#3a9245" strokeWidth="1.500" /><path d="M16 3h11v11H16z" fill="#6cb06c" />
    <path d="M4 4h6l3 5 4-5h5l-6 8 6 9h-6l-3-5-4 5H3l7-9z" fill="#1b7530" /><path d="M13 17l15-4 2 13-15 3z" fill="#fff" stroke="#9dcf9d" /><path d="M15 19l12-3M16 22l12-3M16 25l12-3" stroke="#58a95c" />
  </svg>
);

const ThermoIcon = () => (
  <svg width="30" height="31" viewBox="0 0 30 31">
    <path d="M1 4l9-2v24l-9-2z" fill="#f28a55" stroke="#eee" /><path d="M19 2h8v24h-8z" fill="#8cc0f0" stroke="#eee" />
    <path d="M9 1h9l-1 29H8z" fill="#fff" stroke="#222" /><path d="M12 5h3v15a3.500 3.500 0 1 1-3 0z" fill="#d9141b" />
    <path d="M22 17l7 2c0 6-2 9-7 11-5-2-7-5-7-11z" fill="#2f77c8" stroke="#ddd" /><path d="M22 18v6h6l1-4zM22 24v5c-3-1-5-3-6-5z" fill="#f5c931" />
  </svg>
);

const EvernoteIcon = () => (
  <svg width="30" height="30" viewBox="0 0 30 30">
    <rect x=".5" y=".5" width="29" height="29" fill="#6fc12e" stroke="#a6de6b" strokeWidth="2" />
    <path d="M6 11h5V5c5-1 10-1 11 3 2 5 2 11 1 16-1 3-7 3-7 0 0-2 2-3 4-2v-2c-2-1-4 1-5-2-4 2-9 0-9-7z" fill="#494c4f" />
    <path d="M6 9.500l3.800-4V9.500z" fill="#494c4f" /><circle cx="19.500" cy="13" r="1.200" fill="#6fc12e" />
  </svg>
);

const MonitorIcon = () => (
  <svg width="32" height="30" viewBox="0 0 32 30">
    <path d="M2 4l5-2v19l-5-2z" fill="#cfd2d6" stroke="#888" /><path d="M7 2l23 2-2 18-20-3z" fill="#e2e4e6" stroke="#909499" />
    <path d="M9 4l19 2-2 14-17-3z" fill="#11291b" /><path d="M9 13l4-1 2-5 2 10 3-8 2 7 4-1" fill="none" stroke="#2ddc4d" /><ellipse cx="19" cy="26" rx="8" ry="3" fill="#dcdee0" />
  </svg>
);

const AdobeIcon = () => (
  <svg width="28" height="28" viewBox="0 0 28 28">
    <rect width="28" height="28" fill="#d40d0d" /><path d="M0 14h28v14H0z" fill="#a80808" opacity=".6" />
    <path d="M13 5c2 0 1 6-1 10s-5 8-7 7c-1-2 4-5 9-6s9 0 9 2c-1 2-6-1-8-5s-3-8-2-8z" fill="none" stroke="#fff" strokeWidth="1.500" />
  </svg>
);

const slope = (l: string, r: string) => (
  <Slope width="11" height="15" viewBox="0 0 11 15">
    <path d="M0 0h11L0 15z" fill={l} /><path d="M11 0v15H0z" fill={r} />
    <path d="M11 0L1 14.500M2 11l3 4" stroke="#8d949d" fill="none" />
  </Slope>
);

/* ---------- data ---------- */

const colName = (i: number) => (i < 26 ? String.fromCharCode(65 + i) : `A${String.fromCharCode(65 + i - 26)}`);
const columns = Array.from({ length: 37 }, (_, i) => colName(i));
const colWidth = (i: number) => [46, 70, 18][i] ?? (i < 19 ? 56 : 48);

const distances = ['0,5', '1', '1,5', '2', '2,5', '3', '3,5', '4', '4,5', '5', '5,5', '6', '6,5', '7', '7,5', ''];
const perEdge = ['0,083333', '0,166667', '0,25', '0,333333', '0,416667', '0,5', '0,583333'];

const wear: string[][][] = [
  ['48 53 60 87 111 162 188', '54 60 77 95 94 129 178', '- 83 121 151 152 193 214'],
  ['48 56 69 77 76 185 154', '57 65 77 85 97 90 91', '- - - 103 108 126 251'],
  ['55 69 73 72 78 84 89', '49 59 70 77 83 92 95', '- - - - - 115 168'],
  ['54 67 72 78 87 90 93', '43 55 58 68 72 87 82', '- - - - - - 139'],
  ['44 64 77 91 101 113 126', '52 72 81 104 107 144 176', '- 109 128 147 151 151 155'],
  ['53 65 66 74 77 80 61', '45 63 112 136 153 181 214', '- 126 124 132 145 170 179'],
].map((block) => block.map((row) => row.split(' ')));

const styles = [
  { t: 'Standard', bg: '#fff', fg: '#000', on: true },
  { t: 'Gut', bg: '#c6efce', fg: '#006100' },
  { t: 'Neutral', bg: '#ffeb9c', fg: '#9c6500' },
  { t: 'Schlecht', bg: '#ffc7ce', fg: '#9c0006' },
  { t: 'Ausgabe', bg: '#f2f2f2', fg: '#3f3f3f', line: '#3f3f3f', bold: true },
  { t: 'Berechnung', bg: '#f2f2f2', fg: '#fa7d00', line: '#7f7f7f', bold: true },
  { t: 'Eingabe', bg: '#ffcc99', fg: '#3f3f76', line: '#7f7f7f' },
  { t: 'Erklärender ...', bg: '#fff', fg: '#7f7f7f', it: true },
];

const tabs = [
  { t: 'Perschmann', w: 88, on: true },
  { t: 'Mitsubishi M', w: 80, bg: '#e6b0b2' },
  { t: 'Mitsubishi H', w: 80, bg: '#fbd0a8' },
  { t: 'Pokolm 1', w: 62 },
  { t: 'Pokolm 2', w: 62 },
  { t: 'Pokolm 3', w: 62 },
  { t: 'Pokolm 4', w: 62 },
  { t: 'Alesa 431  AlCrN', w: 102, bg: '#f5f5f5' },
  { t: 'Alesa 431  AlCrN (2)', w: 124, bg: '#f5f5f5' },
  { t: 'Alesa 431  AlCrN-VA', w: 124, bg: '#f5f5f5' },
  { t: 'Alesa 431  AlCrN-VA (2)', w: 142, bg: '#f5f5f5' },
];

const black = '#000';
const mid = '#a0a0a0';

/* ---------- sheet rows ---------- */

const Blank = ({ from, to, b }: { from: number; to: number; b?: string }) => (
  <>{Array.from({ length: to - from + 1 }, (_, i) => <Cell key={i} $b={b} />)}</>
);

const HeadRows = () => (
  <>
    <tr>
      <RowHead $h={19}>1</RowHead>
      <SheetTitle colSpan={2} rowSpan={2}><strong>Vorlage<br />Verschleißmessung</strong></SheetTitle>
      <Cell $r={black} />
      <Cell $align="left" $va="bottom" $b={black}>WSP Typ:</Cell>
      <Cell $b={black} />
      <Cell colSpan={3} $va="bottom" $b={black}>Perschmann 215920 inox HB7573</Cell>
      <Cell $r={black} $b={black} />
      <Cell $r={black} />
      <Cell colSpan={2} $align="left" $va="bottom" $b={black}>Schnittwerte:</Cell>
      <Cell $align="left" $va="bottom" $r={black} $b={black}>100/0,1</Cell>
      <Cell colSpan={4} $va="bottom" $r={black} $b={black}>9% Emulsion&nbsp; Beschriftete Seite</Cell>
      <Blank from={17} to={18} />
    </tr>
    <tr><RowHead $h={15}>2</RowHead><Blank from={2} to={18} /></tr>
    <tr><RowHead $h={15}>3</RowHead><Blank from={0} to={1} b={black} /><Cell /><Blank from={3} to={18} b={black} /></tr>
    <tr>
      <RowHead $h={15}>4</RowHead>
      <Cell><Diagonal viewBox="0 0 46 15" preserveAspectRatio="none"><path d="M0 0L46 15" stroke="#000" /></Diagonal></Cell>
      <Cell $r={black} $align="right">Standweg (m)</Cell>
      <Cell $r={black} />
      {distances.map((d, i) => <Cell key={i} rowSpan={2} $r={black} $b={black}>{d}</Cell>)}
    </tr>
    <tr>
      <RowHead $h={15}>5</RowHead>
      <Cell $align="left" $b={black}>WSP No.</Cell>
      <Cell $r={black} $b={black}><Diagonal viewBox="0 0 70 15" preserveAspectRatio="none"><path d="M0 0L68 15" stroke="#000" /></Diagonal></Cell>
      <Cell $r={black} />
    </tr>
    <tr><RowHead $h={15}>6</RowHead><Cell colSpan={2} $b={black} /><Blank from={2} to={18} b={black} /></tr>
  </>
);

const Block = ({ n }: { n: number }) => (
  <>
    {[0, 1, 2, 3, 4, 5].map((k) => {
      const row = 7 + n * 6 + k;
      const line = Math.floor(k / 2);
      const b = line === 2 ? black : mid;
      const picked = n === 0 && line === 1;
      return (
        <tr key={k}>
          <RowHead $h={16} $on={picked}>{row}</RowHead>
          {k === 0 && <BlockNo colSpan={2} rowSpan={6} $r={black} $b={black}><strong>{n + 1}</strong></BlockNo>}
          {k % 2 === 0 && (
            <>
              <Cell rowSpan={2} $r={black} $b={b}>{'OUA'[line]}</Cell>
              {distances.map((_, i) => (
                <Cell key={i} rowSpan={2} $r={black} $b={b} $sel={picked && i < 7}>{wear[n][line][i] ?? ''}</Cell>
              ))}
            </>
          )}
        </tr>
      );
    })}
  </>
);

const TailRows = () => (
  <>
    <tr><RowHead $h={15}>43</RowHead><Cell colSpan={2} /><Blank from={2} to={18} /></tr>
    <tr>
      <RowHead $h={15} $on>44</RowHead>
      <Cell colSpan={2} $align="left">Standweg Pro schneide</Cell>
      <Cell />
      {perEdge.map((v, i) => <Cell key={v} $align="right" $sel={i > 0} $active={i === 0}>{v}</Cell>)}
      <Blank from={10} to={18} />
    </tr>
    {[45, 46, 47, 48, 49].map((r) => <tr key={r}><RowHead $h={15}>{r}</RowHead><Blank from={0} to={18} /></tr>)}
    {[50, 51, 52, 53].map((r) => <tr key={r}><RowHead $h={15}>{r}</RowHead></tr>)}
  </>
);

/* ---------- app ---------- */

const Label = ({ children, launch = true }: { children: string; launch?: boolean }) => (
  <GroupLabel><span>{children}</span>{launch && <Launcher />}</GroupLabel>
);

export default function App() {
  return (
    <Window>
      <GlobalStyle />
      <Glass>
        <TitleBar>
          <QuickAccess>
            <ExcelLogo />
            <Divider $m={1} />
            <IconButton aria-label="Speichern" $w={18}><SaveIcon /></IconButton>
            <IconButton aria-label="Rückgängig" $w={18}><UndoIcon /></IconButton>
            <Arrow c="#222" s={5} />
            <IconButton aria-label="Wiederholen" $w={18}><UndoIcon redo /></IconButton>
            <Arrow c="#9aa3ad" s={5} />
            <Divider $m={2} />
            <CustomizeIcon />
            <GhostTabs>
              {['#6fa3a8', '#4a86d8', '#4a86d8', '#4a86d8'].map((c, i) => <React.Fragment key={i}><GhostText /><GhostIcon $c={c} /></React.Fragment>)}
            </GhostTabs>
          </QuickAccess>
          <Title>Verschleiss.xlsx  -  Microsoft Excel</Title>
          <Caption>
            <GhostTabs>
              {['#c0506a', '#4a86d8', '#b5705a'].map((c, i) => <React.Fragment key={i}><GhostText /><GhostIcon $c={c} /></React.Fragment>)}
              <GhostText />
            </GhostTabs>
            <CaptionButton aria-label="Minimieren" $w={29}><MinGlyph w={13} /></CaptionButton>
            <CaptionButton aria-label="Verkleinern" $w={27}><RestoreGlyph /></CaptionButton>
            <CaptionButton aria-label="Schließen" $w={47} $close><CloseGlyph /></CaptionButton>
          </Caption>
        </TitleBar>
        <TabRow>
          <FileTab>Datei</FileTab>
          <RibbonTab $active>Start</RibbonTab>
          {['Einfügen', 'Seitenlayout', 'Formeln', 'Daten', 'Überprüfen', 'Ansicht'].map((t) => <RibbonTab key={t}>{t}</RibbonTab>)}
          <TabSpacer />
          <WindowTools>
            <IconButton aria-label="Menüband minimieren" $w={18}>
              <svg width="10" height="8" viewBox="0 0 10 8"><path d="M1 5l4-4 4 4v2L7 7 5 5 3 7H1z" fill="#fff" stroke="#4a5561" /></svg>
            </IconButton>
            <IconButton aria-label="Hilfe" $w={18}><HelpIcon /></IconButton>
            <IconButton aria-label="Mappe minimieren" $w={18}><MinGlyph /></IconButton>
            <IconButton aria-label="Mappe verkleinern" $w={18}><RestoreGlyph /></IconButton>
            <IconButton aria-label="Mappe schließen" $w={18}><CloseGlyph /></IconButton>
          </WindowTools>
        </TabRow>
      </Glass>

      <Ribbon>
        <Group $w={183}>
          <GroupBody>
            <Big $w={52} $off><PasteIcon /><span>Einfügen</span><Arrow c="#aaa" s={6} /></Big>
            <Stack>
              <Small><CutIcon />Ausschneiden</Small>
              <Small><CopyIcon />Kopieren <Arrow s={6} /></Small>
              <Small><BrushIcon />Format übertragen</Small>
            </Stack>
          </GroupBody>
          <Label>Zwischenablage</Label>
        </Group>

        <Group $w={209}>
          <GroupBody $pad="9px 4px 0">
            <Stack $gap={7}>
              <Tools>
                <Field $w={113}><select aria-label="Schriftart"><option>Calibri</option></select><Arrow s={6} /></Field>
                <Field $w={43}><select aria-label="Schriftgrad"><option>14</option></select><Arrow s={6} /></Field>
                <Divider $m={1} />
                <Tool aria-label="Schriftgrad vergrößern"><FontSize up /></Tool>
                <Tool aria-label="Schriftgrad verkleinern"><FontSize /></Tool>
              </Tools>
              <Tools>
                <Tool><Letter>F</Letter></Tool>
                <Tool><Letter $i>K</Letter></Tool>
                <Tool $w={36}><Letter $u>U</Letter><Arrow s={6} /></Tool>
                <Divider $m={3} />
                <Tool $w={36} aria-label="Rahmen"><BordersIcon /><Arrow s={6} /></Tool>
                <Divider $m={3} />
                <Tool $w={33} aria-label="Füllfarbe"><FillIcon /><Arrow s={6} /></Tool>
                <Tool $w={33} aria-label="Schriftfarbe"><FontColorIcon /><Arrow s={6} /></Tool>
              </Tools>
            </Stack>
          </GroupBody>
          <Label>Schriftart</Label>
        </Group>

        <Group $w={310}>
          <GroupBody $pad="9px 5px 0">
            <Stack $gap={7}>
              <Tools>
                <Tool aria-label="Oben ausrichten"><VAlign y={1} /></Tool>
                <Tool aria-label="Zentriert ausrichten"><VAlign y={4} /></Tool>
                <Tool aria-label="Unten ausrichten" $on><VAlign y={7} /></Tool>
                <Divider $m={3} />
                <Tool $w={34} aria-label="Ausrichtung"><OrientIcon /><Arrow s={6} /></Tool>
              </Tools>
              <Tools>
                <Tool aria-label="Linksbündig"><Lines rows={[[0, 14], [0, 9], [0, 14], [0, 9], [0, 14], [0, 9]]} /></Tool>
                <Tool aria-label="Zentriert"><Lines rows={[[0, 14], [3, 11], [0, 14], [3, 11], [0, 14], [3, 11]]} /></Tool>
                <Tool aria-label="Rechtsbündig"><Lines rows={[[0, 14], [5, 14], [0, 14], [5, 14], [0, 14], [5, 14]]} /></Tool>
                <Divider $m={3} />
                <Tool aria-label="Einzug verkleinern"><IndentIcon /></Tool>
                <Tool aria-label="Einzug vergrößern"><IndentIcon right /></Tool>
              </Tools>
            </Stack>
            <Divider $tall $m={4} />
            <Stack $gap={7}>
              <Small $inset><WrapIcon />Zeilenumbruch</Small>
              <MergeButton><MergeIcon />Verbinden und zentrieren<MergeArrow><Arrow s={6} /></MergeArrow></MergeButton>
            </Stack>
          </GroupBody>
          <Label>Ausrichtung</Label>
        </Group>

        <Group $w={143}>
          <GroupBody $pad="9px 4px 0">
            <Stack $gap={7}>
              <Field $w={134}><select aria-label="Zahlenformat"><option>Standard</option></select><Arrow s={6} /></Field>
              <Tools>
                <Tool $w={36} aria-label="Buchhaltungsformat"><MoneyIcon /><Arrow s={6} /></Tool>
                <Tool>%</Tool>
                <Tool>000</Tool>
                <Divider $m={3} />
                <Tool aria-label="Dezimalstelle hinzufügen"><DecimalIcon /></Tool>
                <Tool aria-label="Dezimalstelle löschen"><DecimalIcon less /></Tool>
              </Tools>
            </Stack>
          </GroupBody>
          <Label>Zahl</Label>
        </Group>

        <Group $w={610}>
          <GroupBody $pad="5px 5px 0">
            <Big $w={80}><ConditionalIcon /><span>Bedingte</span><BigLine>Formatierung <Arrow s={6} /></BigLine></Big>
            <Big $w={78}><TableIcon /><span>Als Tabelle</span><BigLine>formatieren <Arrow s={6} /></BigLine></Big>
            <Gallery>
              <Swatches>
                {styles.map((s) => (
                  <Swatch key={s.t} $bg={s.bg} $fg={s.fg} $line={s.line} $bold={s.bold} $it={s.it} $on={s.on}>{s.t}</Swatch>
                ))}
              </Swatches>
              <GalleryScroll>
                <button aria-label="Nach oben"><Arrow up c="#b4b8bd" s={6} /></button>
                <button aria-label="Nach unten"><Arrow s={6} /></button>
                <button aria-label="Weitere"><svg width="7" height="7" viewBox="0 0 7 7"><path d="M0 .5h7" stroke="#555" /><path d="M0 3h7L3.500 7z" fill="#555" /></svg></button>
              </GalleryScroll>
            </Gallery>
          </GroupBody>
          <Label launch={false}>Formatvorlagen</Label>
        </Group>

        <Group $w={150}>
          <GroupBody $pad="3px 5px 0">
            <Big $w={50}><InsertCells /><span>Einfügen</span><BigLine><Arrow s={6} /></BigLine></Big>
            <Big $w={48}><DeleteCells /><span>Löschen</span><BigLine><Arrow s={6} /></BigLine></Big>
            <Big $w={42}><FormatCells /><span>Format</span><BigLine><Arrow s={6} /></BigLine></Big>
          </GroupBody>
          <Label launch={false}>Zellen</Label>
        </Group>

        <Group $w={247}>
          <GroupBody $pad="1px 5px 0 7px">
            <Stack>
              <Small><SumIcon />AutoSumme <Arrow s={6} /></Small>
              <Small><FillDown />Füllbereich <Arrow s={6} /></Small>
              <Small><EraserIcon />Löschen <Arrow s={6} /></Small>
            </Stack>
            <TabSpacer />
            <Big $w={70}><SortIcon /><span>Sortieren</span><BigLine>und Filtern <Arrow s={6} /></BigLine></Big>
            <Big $w={68}><FindIcon /><span>Suchen und</span><BigLine>Auswählen <Arrow s={6} /></BigLine></Big>
          </GroupBody>
          <Label launch={false}>Bearbeiten</Label>
        </Group>
      </Ribbon>

      <FormulaBar>
        <NameBox><input aria-label="Namenfeld" defaultValue="D44" /><Arrow c="#333" /></NameBox>
        <FxZone><FxKnob /><FxButton>fx</FxButton></FxZone>
        <Formula aria-label="Bearbeitungsleiste" defaultValue="=(D4/6)" />
        <Expand aria-label="Bearbeitungsleiste erweitern"><svg width="8" height="6" viewBox="0 0 8 6"><path d="M0 0l4 4 4-4v2L4 6 0 2z" fill="#444" /></svg></Expand>
      </FormulaBar>

      <Work>
        <Canvas>
          <Paper $top={13} $h={671} $size={106} $drop={16}>Seite 1</Paper>
          <Paper $top={684} $h={105} $size={28} $drop={2}>Seite 2</Paper>
          <Sheet>
            <colgroup>
              <col width={24} />
              {columns.map((c, i) => <col key={c} width={colWidth(i)} />)}
            </colgroup>
            <thead>
              <tr>
                <ColHead aria-label="Alles markieren" />
                {columns.map((c, i) => <ColHead key={c} $on={i > 2 && i < 10}>{c}</ColHead>)}
              </tr>
            </thead>
            <tbody>
              <HeadRows />
              {wear.map((_, n) => <Block key={n} n={n} />)}
              <TailRows />
            </tbody>
          </Sheet>
          <PageBorder $top={13} $h={671} />
          <PageBorder $top={684} $h={105} />
        </Canvas>
        <VScroll>
          <SplitBox />
          <ScrollArrow aria-label="Nach oben"><Arrow up c="#444" s={9} /></ScrollArrow>
          <VThumb><svg width="7" height="7" viewBox="0 0 7 7" stroke="#7d848c"><path d="M0 .5h7M0 2.500h7M0 4.500h7M0 6.500h7" /></svg></VThumb>
          <ScrollArrow aria-label="Nach unten"><Arrow c="#444" s={9} /></ScrollArrow>
        </VScroll>
      </Work>

      <TabBar>
        <TabArea>
          <NavButtons>
            <IconButton $w={15} $h={15} aria-label="Erstes Blatt"><svg width="8" height="8" viewBox="0 0 8 8"><path d="M.5 0v8M7 0v8L2 4z" fill="#555" stroke="#555" strokeWidth=".6" /></svg></IconButton>
            <IconButton $w={15} $h={15} aria-label="Vorheriges Blatt"><Arrow left s={8} /></IconButton>
            <IconButton $w={15} $h={15} aria-label="Nächstes Blatt"><Arrow right s={8} /></IconButton>
            <IconButton $w={15} $h={15} aria-label="Letztes Blatt"><svg width="8" height="8" viewBox="0 0 8 8"><path d="M7.500 0v8M1 0v8l5-4z" fill="#555" stroke="#555" strokeWidth=".6" /></svg></IconButton>
          </NavButtons>
          {tabs.map((t, i) => (
            <React.Fragment key={t.t}>
              {i > 0 && slope(tabs[i - 1].bg ?? '#fff', t.bg ?? '#fff')}
              <SheetTab $w={t.w} $bg={t.bg} $on={t.on}>{t.t}</SheetTab>
            </React.Fragment>
          ))}
        </TabArea>
        <SplitBox $v />
        <ScrollArrow aria-label="Nach links" $h={15}><Arrow left c="#444" s={9} /></ScrollArrow>
        <HThumb><svg width="7" height="7" viewBox="0 0 7 7" stroke="#7d848c"><path d="M.5 0v7M2.500 0v7M4.500 0v7M6.500 0v7" /></svg></HThumb>
        <ScrollArrow aria-label="Nach rechts" $h={15}><Arrow right c="#444" s={9} /></ScrollArrow>
        <SplitBox $v />
      </TabBar>

      <StatusBar>
        <Ready>Bereit</Ready>
        <Stats><span>Mittelwert: 49,23809524</span><span>Anzahl: 14</span><span>Summe: 689,3333333</span></Stats>
        <Views>
          <ViewButton aria-label="Normal"><svg width="13" height="11" viewBox="0 0 13 11" fill="#fff" stroke="#5b636d"><path d="M.5.5h12v10H.5zM4.500.5v10M8.500.5v10M.5 4h12M.5 7h12" /></svg></ViewButton>
          <ViewButton aria-label="Seitenlayout"><svg width="13" height="12" viewBox="0 0 13 12" fill="#b9bec5" stroke="#5b636d"><path d="M.5.5h12v11H.5z" /><path d="M3.500 2.500h6v7h-6zM5 5h3M5 7h3" fill="#fff" /></svg></ViewButton>
          <ViewButton aria-label="Umbruchvorschau" $on><svg width="13" height="12" viewBox="0 0 13 12" fill="#b9bec5" stroke="#5b636d"><path d="M.5.5h12v11H.5z" /><path d="M.5.5h8v6h-8zM4.500.5v6" fill="#fff" /></svg></ViewButton>
        </Views>
        <ZoomValue>60 %</ZoomValue>
        <IconButton aria-label="Verkleinern"><svg width="16" height="16" viewBox="0 0 16 16"><circle cx="8" cy="8" r="7" fill="#eef0f2" stroke="#7c848e" /><path d="M4 8h8" stroke="#444" strokeWidth="2" /></svg></IconButton>
        <ZoomSlider type="range" aria-label="Zoom" min={0} max={100} defaultValue={28} />
        <IconButton aria-label="Vergrößern"><svg width="16" height="16" viewBox="0 0 16 16"><circle cx="8" cy="8" r="7" fill="#eef0f2" stroke="#7c848e" /><path d="M4 8h8M8 4v8" stroke="#444" strokeWidth="2" /></svg></IconButton>
      </StatusBar>

      <Taskbar>
        <TaskItems>
          <TaskButton $w={56} aria-label="Start"><StartOrb /></TaskButton>
          <TaskButton $w={64} aria-label="Explorer"><FolderIcon /></TaskButton>
          <TaskButton aria-label="Media Player"><MediaIcon /></TaskButton>
          <TaskButton $open $w={58} aria-label="Chrome"><ChromeIcon /></TaskButton>
          <TaskButton aria-label="Globus"><GlobeIcon /></TaskButton>
          <TaskButton $open $w={54} aria-label="Outlook"><OutlookIcon /></TaskButton>
          <StackEdge />
          <TaskButton $open $bright $w={58} aria-label="Excel"><ExcelIcon /></TaskButton>
          <TaskButton aria-label="Temperatur"><ThermoIcon /></TaskButton>
          <TaskButton aria-label="Evernote"><EvernoteIcon /></TaskButton>
          <TaskButton aria-label="Monitor"><MonitorIcon /></TaskButton>
          <TaskButton $open $w={58} aria-label="Adobe Reader"><AdobeIcon /></TaskButton>
        </TaskItems>
        <Tray>
          <Power>
            <Battery>100%</Battery>
            <BatteryCap />
            <svg width="16" height="15" viewBox="0 0 16 15" stroke="#fff" fill="#111"><path d="M6 1.500h5v3h4v2h-4v2h4v2h-4v3H6A6 6 0 0 1 6 1.500z" /></svg>
          </Power>
          <TrayIcons>
            <Arrow up c="#fff" s={9} />
            <svg width="16" height="18" viewBox="0 0 16 18" fill="#fff"><path d="M1 1h1.500v16H1zM3 2h6v7H3zM10 4h5l-2 3 1 2h-4z" /></svg>
            <svg width="15" height="17" viewBox="0 0 15 17" fill="none" stroke="#fff" strokeWidth="1.500"><path d="M8 16H1V3h9M3 5h3M3 8h3" /><path d="M9 4v4M13 4v4" /><path d="M7 8h8v2q0 3-4 3t-4-3zM11 13v3" fill="#fff" /></svg>
            <svg width="15" height="16" viewBox="0 0 15 16" fill="none" stroke="#fff"><path d="M1 5h2l4-4v14l-4-4H1z" fill="#fff" /><path d="M9 5q2 3 0 6M11 3q4 5 0 10" /></svg>
            <svg width="16" height="17" viewBox="0 0 16 17"><path d="M4 1l4 3-4 3-4-3zM12 1l4 3-4 3-4-3zM4 7l4 3-4 3-4-3zM12 7l4 3-4 3-4-3zM8 10l4 3-4 3-4-3z" fill="#6db7ee" /><circle cx="12" cy="13" r="4" fill="#29a13a" /><path d="M10 13l2 2 3-4" stroke="#fff" fill="none" /></svg>
          </TrayIcons>
          <Clock>14:22<br />18.08.2013</Clock>
          <ShowDesktop aria-label="Desktop anzeigen" />
        </Tray>
      </Taskbar>
    </Window>
  );
}
